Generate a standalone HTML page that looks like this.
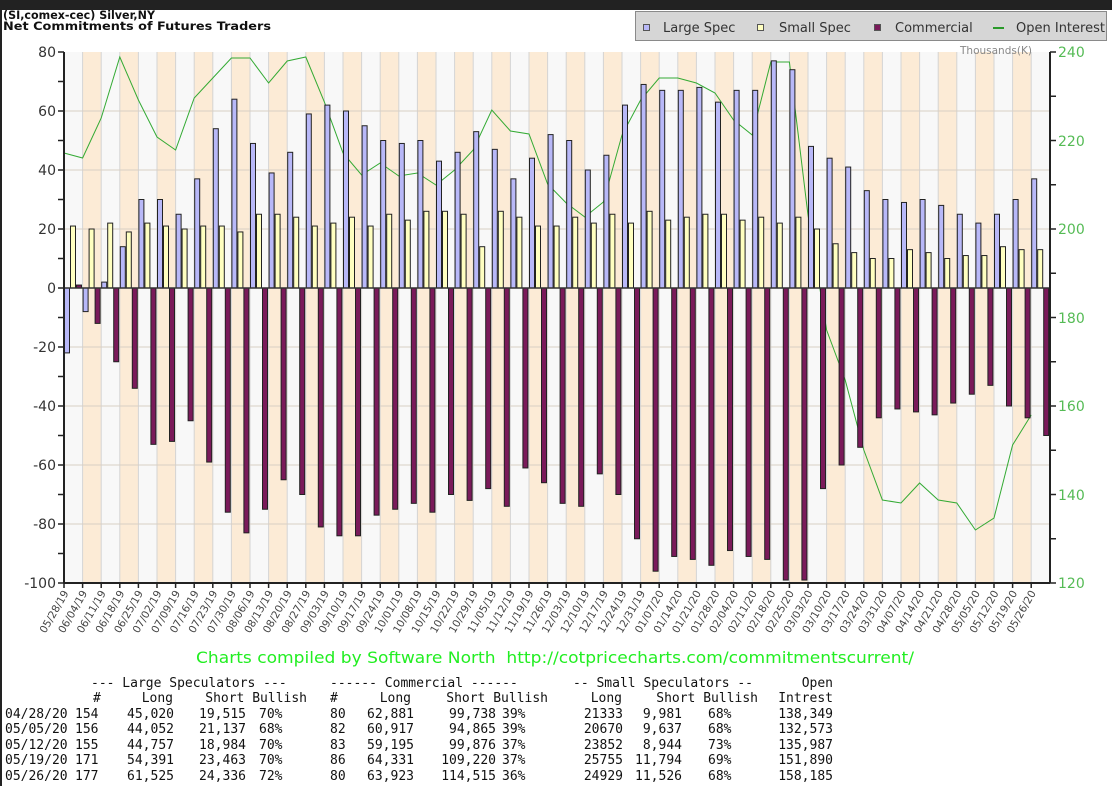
<!DOCTYPE html>
<html><head><meta charset="utf-8"><style>
html,body{margin:0;padding:0;background:#fff;width:1112px;height:786px;overflow:hidden}
svg{display:block}
</style></head><body>
<svg id="s" width="1112" height="786" xmlns="http://www.w3.org/2000/svg" font-family="'DejaVu Sans', 'Liberation Sans', sans-serif">
<rect x="0" y="0" width="1112" height="786" fill="#fff"/>
<rect x="0" y="0" width="1112" height="10" fill="#222"/>
<rect x="0" y="0" width="2" height="786" fill="#222"/>
<g id="plot"></g>
<text x="3" y="19" font-size="11.5" font-weight="bold" fill="#111" textLength="152" lengthAdjust="spacingAndGlyphs">(SI,comex-cec) Silver,NY</text>
<text x="3" y="30" font-size="11.5" font-weight="bold" fill="#111" textLength="268" lengthAdjust="spacingAndGlyphs">Net Commitments of Futures Traders</text>
<rect x="635.5" y="11.5" width="471" height="29" fill="#d6d6d6" stroke="#8a8a8a"/>
<rect x="643.5" y="24.5" width="6" height="6" fill="#b8b8f8" stroke="#555"/>
<text x="663" y="32" font-size="13" fill="#333">Large Spec</text>
<rect x="757.5" y="24.5" width="6" height="6" fill="#ffffc0" stroke="#555"/>
<text x="779" y="32" font-size="13" fill="#333">Small Spec</text>
<rect x="874.5" y="24.5" width="6" height="6" fill="#7a1a5a" stroke="#555"/>
<text x="895" y="32" font-size="13" fill="#333">Commercial</text>
<rect x="993" y="27" width="11" height="2" fill="#2a9a2a"/>
<text x="1016" y="32" font-size="13" fill="#333">Open Interest</text>
<text x="960" y="54" font-size="10.5" fill="#888">Thousands(K)</text>
<g font-size="14" fill="#333" text-anchor="end">
<text x="56" y="57">80</text><text x="56" y="116">60</text><text x="56" y="175">40</text><text x="56" y="234">20</text><text x="56" y="293">0</text><text x="56" y="352">-20</text><text x="56" y="411">-40</text><text x="56" y="470">-60</text><text x="56" y="529">-80</text><text x="56" y="588">-100</text>
</g>
<g font-size="14" fill="#55bb55">
<text x="1058" y="57">240</text><text x="1058" y="146">220</text><text x="1058" y="234">200</text><text x="1058" y="323">180</text><text x="1058" y="411">160</text><text x="1058" y="500">140</text><text x="1058" y="588">120</text>
</g>
<g id="dates" font-size="10.5" fill="#444" text-anchor="end">
<text>05/28/19</text><text>06/04/19</text><text>06/11/19</text><text>06/18/19</text><text>06/25/19</text><text>07/02/19</text><text>07/09/19</text><text>07/16/19</text><text>07/23/19</text><text>07/30/19</text><text>08/06/19</text><text>08/13/19</text><text>08/20/19</text><text>08/27/19</text><text>09/03/19</text><text>09/10/19</text><text>09/17/19</text><text>09/24/19</text><text>10/01/19</text><text>10/08/19</text><text>10/15/19</text><text>10/22/19</text><text>10/29/19</text><text>11/05/19</text><text>11/12/19</text><text>11/19/19</text><text>11/26/19</text><text>12/03/19</text><text>12/10/19</text><text>12/17/19</text><text>12/24/19</text><text>12/31/19</text><text>01/07/20</text><text>01/14/20</text><text>01/21/20</text><text>01/28/20</text><text>02/04/20</text><text>02/11/20</text><text>02/18/20</text><text>02/25/20</text><text>03/03/20</text><text>03/10/20</text><text>03/17/20</text><text>03/24/20</text><text>03/31/20</text><text>04/07/20</text><text>04/14/20</text><text>04/21/20</text><text>04/28/20</text><text>05/05/20</text><text>05/12/20</text><text>05/19/20</text><text>05/26/20</text>
</g>
<text x="196" y="663" font-size="16" fill="#22ee22" textLength="718" lengthAdjust="spacingAndGlyphs" xml:space="preserve">Charts compiled by Software North  http://cotpricecharts.com/commitmentscurrent/</text>
<g font-family="'DejaVu Sans Mono','Liberation Mono',monospace" font-size="13" fill="#111" xml:space="preserve">
<text x="91" y="687">--- Large Speculators ---</text>
<text x="330" y="687">------ Commercial ------</text>
<text x="573" y="687">-- Small Speculators --</text>
<text x="833" y="687" text-anchor="end">Open</text>
<text x="93" y="702">#</text>
<text x="173" y="702" text-anchor="end">Long</text>
<text x="307" y="702" text-anchor="end">Short Bullish</text>
<text x="330" y="702">#</text>
<text x="411" y="702" text-anchor="end">Long</text>
<text x="548" y="702" text-anchor="end">Short Bullish</text>
<text x="622" y="702" text-anchor="end">Long</text>
<text x="758" y="702" text-anchor="end">Short Bullish</text>
<text x="833" y="702" text-anchor="end">Intrest</text>
</g>
<g id="rows" font-family="'DejaVu Sans Mono','Liberation Mono',monospace" font-size="13" fill="#111">
<g><text x="5">04/28/20</text><text x="75">154</text><text x="174" text-anchor="end">45,020</text><text x="246" text-anchor="end">19,515</text><text x="259">70%</text><text x="330">80</text><text x="414" text-anchor="end">62,881</text><text x="496" text-anchor="end">99,738</text><text x="502">39%</text><text x="623" text-anchor="end">21333</text><text x="682" text-anchor="end">9,981</text><text x="708">68%</text><text x="833" text-anchor="end">138,349</text></g>
<g><text x="5">05/05/20</text><text x="75">156</text><text x="174" text-anchor="end">44,052</text><text x="246" text-anchor="end">21,137</text><text x="259">68%</text><text x="330">82</text><text x="414" text-anchor="end">60,917</text><text x="496" text-anchor="end">94,865</text><text x="502">39%</text><text x="623" text-anchor="end">20670</text><text x="682" text-anchor="end">9,637</text><text x="708">68%</text><text x="833" text-anchor="end">132,573</text></g>
<g><text x="5">05/12/20</text><text x="75">155</text><text x="174" text-anchor="end">44,757</text><text x="246" text-anchor="end">18,984</text><text x="259">70%</text><text x="330">83</text><text x="414" text-anchor="end">59,195</text><text x="496" text-anchor="end">99,876</text><text x="502">37%</text><text x="623" text-anchor="end">23852</text><text x="682" text-anchor="end">8,944</text><text x="708">73%</text><text x="833" text-anchor="end">135,987</text></g>
<g><text x="5">05/19/20</text><text x="75">171</text><text x="174" text-anchor="end">54,391</text><text x="246" text-anchor="end">23,463</text><text x="259">70%</text><text x="330">86</text><text x="414" text-anchor="end">64,331</text><text x="496" text-anchor="end">109,220</text><text x="502">37%</text><text x="623" text-anchor="end">25755</text><text x="682" text-anchor="end">11,794</text><text x="708">69%</text><text x="833" text-anchor="end">151,890</text></g>
<g><text x="5">05/26/20</text><text x="75">177</text><text x="174" text-anchor="end">61,525</text><text x="246" text-anchor="end">24,336</text><text x="259">72%</text><text x="330">80</text><text x="414" text-anchor="end">63,923</text><text x="496" text-anchor="end">114,515</text><text x="502">36%</text><text x="623" text-anchor="end">24929</text><text x="682" text-anchor="end">11,526</text><text x="708">68%</text><text x="833" text-anchor="end">158,185</text></g>
</g>
</svg>
<script>
(function(){
var NS="http://www.w3.org/2000/svg";
var g=document.getElementById("plot");
function el(t,a){var e=document.createElementNS(NS,t);for(var k in a)e.setAttribute(k,a[k]);g.appendChild(e);return e;}
var X0=64,W=18.6,N=53,TOP=52,BOT=583;
function Y(v){return 288-v*2.95;}
for(var i=0;i<N;i++){
  el("rect",{x:X0+i*W,y:TOP,width:W+0.3,height:BOT-TOP,fill:(i%2?"#fcebd6":"#f8f8f8")});
}
for(var i=1;i<N;i++){var x=X0+i*W;el("line",{x1:x,y1:TOP,x2:x,y2:BOT,stroke:"#d4d4d4","stroke-width":1});}
for(var v=60;v>=-80;v-=20){el("line",{x1:X0,y1:Y(v),x2:1050,y2:Y(v),stroke:"#d8cfc4","stroke-width":1});}
var L=[-22,-8,2,14,30,30,25,37,54,64,49,39,46,59,62,60,55,50,49,50,43,46,53,47,37,44,52,50,40,45,62,69,67,67,68,63,67,67,77,74,48,44,41,33,30,29,30,28,25,22,25,30,37];
var S=[21,20,22,19,22,21,20,21,21,19,25,25,24,21,22,24,21,25,23,26,26,25,14,26,24,21,21,24,22,25,22,26,23,24,25,25,23,24,22,24,20,15,12,10,10,13,12,10,11,11,14,13,13];
var C=[1,-12,-25,-34,-53,-52,-45,-59,-76,-83,-75,-65,-70,-81,-84,-84,-77,-75,-73,-76,-70,-72,-68,-74,-61,-66,-73,-74,-63,-70,-85,-96,-91,-92,-94,-89,-91,-92,-99,-99,-68,-60,-54,-44,-41,-42,-43,-39,-36,-33,-40,-44,-50];
var cols=["#b8b8f8","#ffffc0","#7a1a5a"];
function bar(x,v,c){var y1=Y(Math.max(v,0)),y2=Y(Math.min(v,0));el("rect",{x:x,y:y1,width:5,height:Math.max(y2-y1,0.5),fill:c,stroke:"#222","stroke-width":1});}
var oi=[153,158,118,57,100,137,150,98,78,58,58,83,61,57,102,153,175,163,176,173,185,170,150,110,131,134,184,203,217,202,135,100,78,78,83,93,120,135,62,62,215,330,380,450,500,503,483,500,503,530,518,445,415];
var pts=[];for(var i=0;i<N;i++)pts.push((X0+i*W).toFixed(1)+","+oi[i]);
el("polyline",{points:pts.join(" "),fill:"none",stroke:"#33aa33","stroke-width":1});
for(var i=0;i<N;i++){var x=X0+i*W;bar(x+0.5,L[i],cols[0]);bar(x+6.5,S[i],cols[1]);bar(x+12.5,C[i],cols[2]);}
el("line",{x1:X0,y1:288,x2:1050,y2:288,stroke:"#333","stroke-width":1.5});
el("line",{x1:X0,y1:TOP,x2:X0,y2:BOT,stroke:"#222","stroke-width":2});
el("line",{x1:1050,y1:TOP,x2:1050,y2:BOT,stroke:"#222","stroke-width":2});
el("line",{x1:X0,y1:BOT,x2:1050,y2:BOT,stroke:"#222","stroke-width":2});
for(var v=80;v>=-100;v-=10){el("line",{x1:X0-6,y1:Y(v),x2:X0,y2:Y(v),stroke:"#222","stroke-width":1.5});}
for(var k=0;k<=12;k++){var y=TOP+k*(BOT-TOP)/12;el("line",{x1:1050,y1:y,x2:1056,y2:y,stroke:"#222","stroke-width":1.5});}
for(var i=0;i<N;i++){var x=X0+i*W;el("line",{x1:x,y1:BOT,x2:x,y2:BOT+5,stroke:"#222","stroke-width":1.5});}
var ds=document.getElementById("dates").children;
for(var i=0;i<ds.length;i++){var x=X0+i*W+5;ds[i].setAttribute("transform","translate("+x+",593) rotate(-60)");}
var rows=document.getElementById("rows").children,ys=[718,733,749,764,780];
for(var r=0;r<rows.length;r++){var t=rows[r].children;for(var j=0;j<t.length;j++)t[j].setAttribute("y",ys[r]);}
})();
</script>
</body></html>
